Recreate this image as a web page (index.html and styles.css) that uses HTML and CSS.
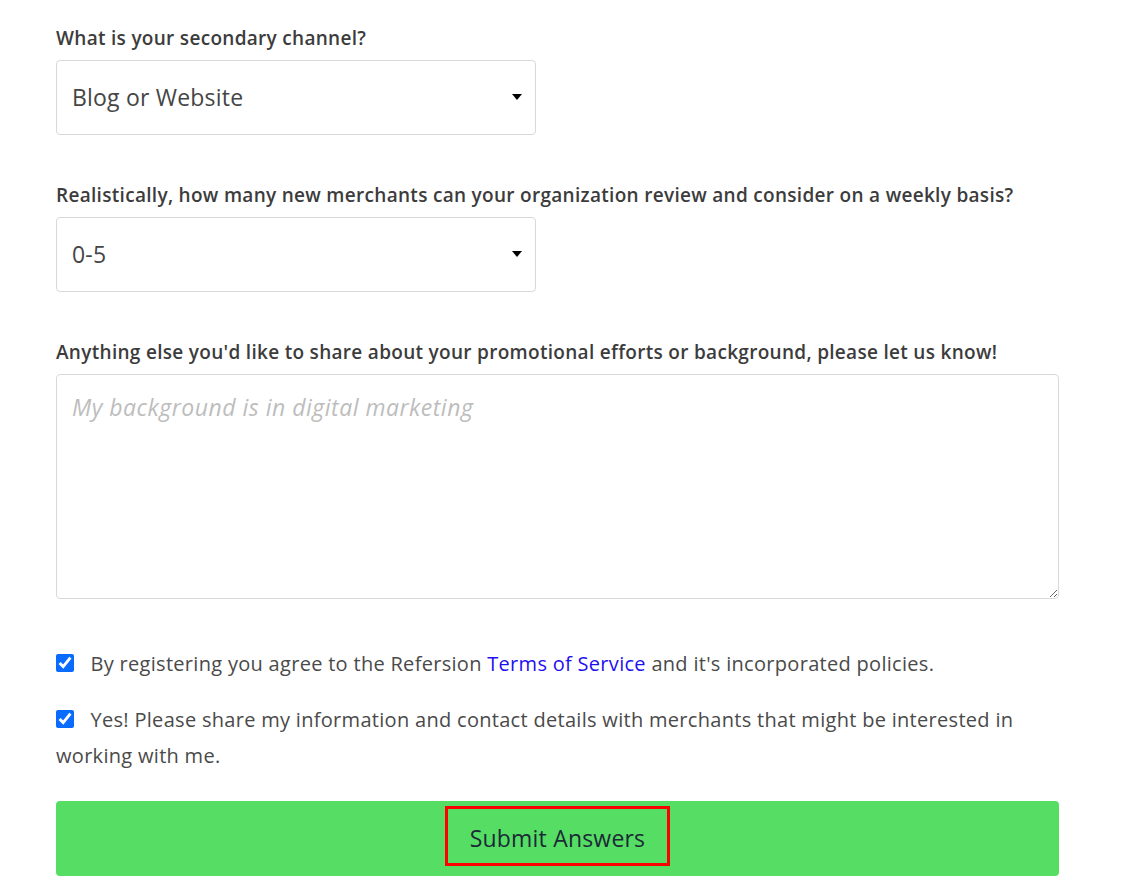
FILE: index.html
```html
<!DOCTYPE html>
<html lang="en">
<head>
    <meta charset="UTF-8">
    <title>Refersion Partner Questions</title>
    <link rel="stylesheet" href="styles.css">
</head>
<body>
    <form class="questions-form">
        <div class="form-group">
            <label for="secondaryChannel">What is your secondary channel?</label>
            <div class="select-wrap">
                <select id="secondaryChannel">
                    <option>Blog or Website</option>
                    <option>Social Media</option>
                    <option>Email</option>
                </select>
            </div>
        </div>

        <div class="form-group">
            <label for="weeklyMerchants">Realistically, how many new merchants can your organization review and consider on a weekly basis?</label>
            <div class="select-wrap">
                <select id="weeklyMerchants">
                    <option>0-5</option>
                    <option>6-10</option>
                    <option>11+</option>
                </select>
            </div>
        </div>

        <div class="form-group last">
            <label for="background">Anything else you'd like to share about your promotional efforts or background, please let us know!</label>
            <textarea id="background" placeholder="My background is in digital marketing"></textarea>
        </div>

        <div class="check-row">
            <input type="checkbox" id="terms" checked>
            <label for="terms">By registering you agree to the Refersion <a href="#">Terms of Service</a> and it's incorporated policies.</label>
        </div>

        <div class="check-row">
            <input type="checkbox" id="share" checked>
            <label for="share">Yes! Please share my information and contact details with merchants that might be interested in working with me.</label>
        </div>

        <button type="submit" class="submit-btn"><span class="submit-label">Submit Answers</span></button>
    </form>
</body>
</html>
```

FILE: styles.css
```css
* {
    margin: 0;
    padding: 0;
    box-sizing: border-box;
}

body {
    font-family: 'Open Sans', 'Lato', sans-serif;
    background: #ffffff;
    color: #444444;
}

.questions-form {
    width: 1003px;
    margin-left: 56px;
    padding-top: 26px;
}

.form-group {
    margin-bottom: 48px;
}

.form-group.last {
    margin-bottom: 47px;
}

.form-group label {
    display: block;
    font-size: 19px;
    line-height: 24px;
    font-weight: 600;
    letter-spacing: 0.3px;
    color: #3c3c3c;
    margin-bottom: 10px;
}

.select-wrap {
    position: relative;
    width: 480px;
}

.select-wrap::after {
    content: '';
    position: absolute;
    right: 14px;
    top: 34px;
    border-left: 5px solid transparent;
    border-right: 5px solid transparent;
    border-top: 6px solid #000000;
    pointer-events: none;
}

.select-wrap select {
    appearance: none;
    -webkit-appearance: none;
    width: 100%;
    height: 75px;
    padding: 0 40px 2px 15px;
    border: 1px solid #d8d8d8;
    border-radius: 4px;
    background: #ffffff;
    font-family: inherit;
    font-size: 23px;
    letter-spacing: 0.2px;
    color: #454545;
}

textarea {
    display: block;
    width: 100%;
    height: 225px;
    padding: 16px 15px;
    border: 1px solid #d8d8d8;
    border-radius: 4px;
    font-family: inherit;
    font-size: 23px;
    letter-spacing: 0.5px;
    color: #454545;
}

textarea::placeholder {
    color: #bdbdbd;
    font-style: italic;
}

.check-row {
    font-size: 20px;
    line-height: 36px;
    letter-spacing: 0.3px;
    color: #4a4a4a;
    margin-bottom: 20px;
}

.check-row:last-of-type {
    margin-bottom: 27px;
}

.check-row input {
    width: 18px;
    height: 18px;
    margin: 0 11px 0 0;
    vertical-align: -1px;
    accent-color: #0a6cff;
}

.check-row a {
    color: #1f10f0;
    text-decoration: none;
}

.submit-btn {
    display: flex;
    align-items: flex-start;
    justify-content: center;
    width: 100%;
    height: 75px;
    padding-top: 5px;
    background: #55de63;
    border: none;
    border-radius: 4px;
    cursor: pointer;
    font-family: inherit;
}

.submit-label {
    display: inline-block;
    height: 60px;
    padding: 0 22px;
    line-height: 58px;
    border: 3px solid #ff0000;
    font-size: 23px;
    letter-spacing: 0.2px;
    color: #1c2a36;
}
```
